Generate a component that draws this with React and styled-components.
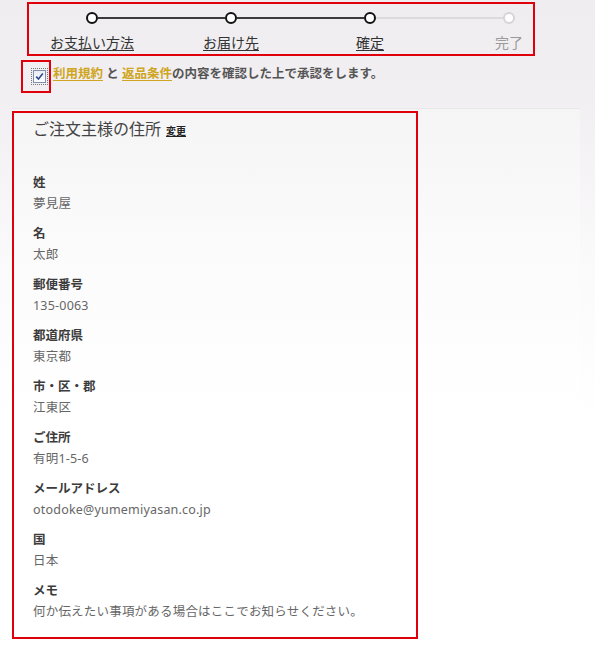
import React from "react";
import styled, { createGlobalStyle } from "styled-components";

const Global = createGlobalStyle`
  html, body { margin: 0; padding: 0; }
  body {
    width: 595px;
    min-height: 646px;
    background: linear-gradient(#efedef 0, #f1eff1 100px, #fbfafb 260px, #fff 420px);
    font-family: "Noto Sans", "Noto Sans CJK JP", sans-serif;
    color: #333;
  }
`;

const Page = styled.div`
  padding-top: 2px;
  height: 644px;
  overflow: hidden;
`;

const Stepper = styled.div`
  margin-left: 27px;
  width: 508px;
  height: 54px;
  box-sizing: border-box;
  border: 2px solid #e0000b;
  padding: 8px 0 0 57px;
`;

const Track = styled.div`
  display: flex;
  align-items: center;
  height: 12px;
`;

const Dot = styled.span`
  width: 12px;
  height: 12px;
  box-sizing: border-box;
  border-radius: 50%;
  background: #fff;
  border: 2px solid ${(p) => (p.$off ? "#d6d4d6" : "#111")};
  flex: none;
`;

const Segment = styled.span`
  width: 127px;
  height: 2px;
  flex: none;
  background: ${(p) => (p.$off ? "#dcdadc" : "#3a3a3a")};
`;

const Labels = styled.div`
  display: flex;
  gap: 127px;
  margin-top: 10px;
`;

const StepLabel = styled.span`
  width: 12px;
  display: flex;
  justify-content: center;
  white-space: nowrap;
  font-size: 14px;
  line-height: 18px;
  color: ${(p) => (p.$off ? "#9a9a9a" : "#333")};
  text-decoration: ${(p) => (p.$off ? "none" : "underline")};
  text-underline-offset: 2px;
`;

const AgreeRow = styled.div`
  display: flex;
  align-items: flex-start;
  margin: 4px 0 0 21px;
`;

const CheckFrame = styled.div`
  width: 30px;
  height: 33px;
  box-sizing: border-box;
  border: 2px solid #e0000b;
  padding: 2px 0 0 8px;
`;

const CheckFocus = styled.span`
  display: inline-flex;
  padding: 1px;
  border: 1px dotted #777;
`;

const CheckBox = styled.span`
  width: 13px;
  height: 13px;
  box-sizing: border-box;
  border: 1px solid #7f90ad;
  background: linear-gradient(#e9edf4, #fdfdfe);
  display: flex;
  align-items: center;
  justify-content: center;
`;

const AgreeText = styled.p`
  margin: 0 0 0 2px;
  padding-top: 5px;
  font-size: 12.5px;
  line-height: 18px;
  font-weight: 700;
  color: #555;
  white-space: nowrap;
`;

const Gold = styled.a`
  color: #cfa521;
  text-decoration: underline;
  text-underline-offset: 2px;
`;

const Panel = styled.div`
  margin: 15px 0 0 12px;
  width: 568px;
  padding-top: 2px;
  border-top: 1px solid #e9e7e9;
  background: linear-gradient(#f6f5f6 0, #fcfbfc 140px, #fff 300px);
  display: flex;
`;

const AddressBox = styled.section`
  width: 406px;
  box-sizing: border-box;
  border: 2px solid #e0000b;
  padding: 4px 0 15px 19px;
`;

const Title = styled.h2`
  margin: 0 0 30px;
  font-size: 16px;
  line-height: 24px;
  font-weight: 400;
  color: #444;
`;

const Change = styled.a`
  margin-left: 5px;
  font-size: 10px;
  font-weight: 700;
  color: #222;
  text-decoration: underline;
`;

const Field = styled.div`
  margin-bottom: 10px;
  &:last-child { margin-bottom: 0; }
`;

const FieldLabel = styled.div`
  font-size: 12.5px;
  line-height: 20px;
  font-weight: 700;
  color: #3c3c3c;
`;

const FieldValue = styled.div`
  font-size: 12.5px;
  line-height: 21px;
  color: #666;
  letter-spacing: 0.2px;
`;

const steps = [
  { label: "お支払い方法" },
  { label: "お届け先" },
  { label: "確定" },
  { label: "完了", off: true },
];

const fields = [
  ["姓", "夢見屋"],
  ["名", "太郎"],
  ["郵便番号", "135-0063"],
  ["都道府県", "東京都"],
  ["市・区・郡", "江東区"],
  ["ご住所", "有明1-5-6"],
  ["メールアドレス", "otodoke@yumemiyasan.co.jp"],
  ["国", "日本"],
  ["メモ", "何か伝えたい事項がある場合はここでお知らせください。"],
];

export default function App() {
  return (
    <>
      <Global />
      <Page>
        <Stepper>
          <Track>
            {steps.map((s, i) => (
              <React.Fragment key={s.label}>
                {i > 0 && <Segment $off={s.off} />}
                <Dot $off={s.off} />
              </React.Fragment>
            ))}
          </Track>
          <Labels>
            {steps.map((s) => (
              <StepLabel key={s.label} $off={s.off}>
                {s.label}
              </StepLabel>
            ))}
          </Labels>
        </Stepper>

        <AgreeRow>
          <CheckFrame>
            <CheckFocus>
              <CheckBox>
                <svg width="9" height="9" viewBox="0 0 9 9">
                  <path d="M1.2 4.6 L3.5 7 L7.8 1.6" fill="none" stroke="#2c4a8c" strokeWidth="1.6" />
                </svg>
              </CheckBox>
            </CheckFocus>
          </CheckFrame>
          <AgreeText>
            <Gold>利用規約</Gold> と <Gold>返品条件</Gold>の内容を確認した上で承認をします。
          </AgreeText>
        </AgreeRow>

        <Panel>
          <AddressBox>
            <Title>
              ご注文主様の住所<Change>変更</Change>
            </Title>
            {fields.map(([k, v]) => (
              <Field key={k}>
                <FieldLabel>{k}</FieldLabel>
                <FieldValue>{v}</FieldValue>
              </Field>
            ))}
          </AddressBox>
        </Panel>
      </Page>
    </>
  );
}
